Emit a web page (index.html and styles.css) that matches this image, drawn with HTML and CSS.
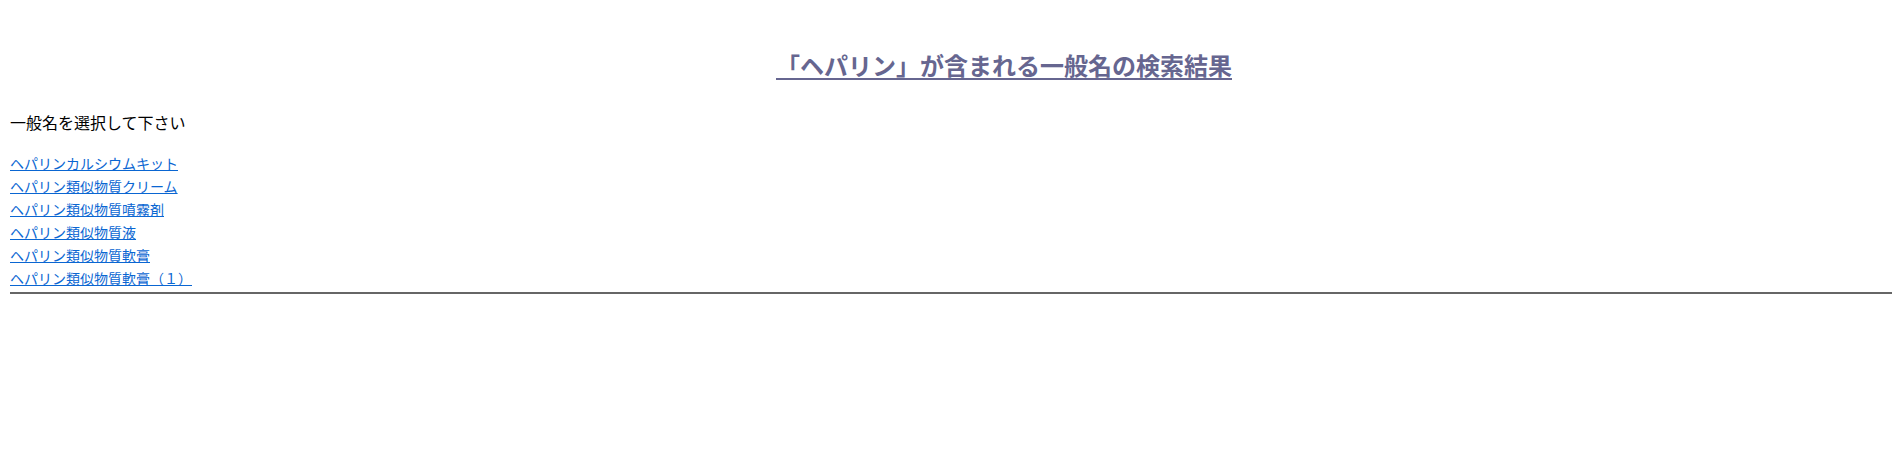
FILE: index.html
```html
<!DOCTYPE html>
<html lang="ja">
<head>
<meta charset="utf-8">
<title>検索結果</title>
<link rel="stylesheet" href="styles.css">
</head>
<body>
<div class="page">
  <h1 class="title">「ヘパリン」が含まれる一般名の検索結果</h1>
  <p class="lead">一般名を選択して下さい</p>
  <ul class="list">
    <li><a href="#">ヘパリンカルシウムキット</a></li>
    <li><a href="#">ヘパリン類似物質クリーム</a></li>
    <li><a href="#">ヘパリン類似物質噴霧剤</a></li>
    <li><a href="#">ヘパリン類似物質液</a></li>
    <li><a href="#">ヘパリン類似物質軟膏</a></li>
    <li><a href="#">ヘパリン類似物質軟膏（１）</a></li>
  </ul>
  <div class="rule"></div>
</div>
</body>
</html>
```
FILE: styles.css
```css
body {
  margin: 0;
  background: #fff;
  font-family: "Noto Sans CJK JP", "Noto Sans", sans-serif;
  color: #000;
}
.page {
  padding-left: 10px;
  padding-top: 49px;
}
.title {
  margin: 0;
  padding-left: 106px;
  text-align: center;
  font-size: 24px;
  line-height: 32px;
  font-weight: bold;
  color: #666690;
  text-decoration: underline;
  text-underline-offset: 3px;
}
.lead {
  margin: 29px 0 0;
  font-size: 16px;
  line-height: 24px;
}
.list {
  list-style: none;
  margin: 18px 0 0;
  padding: 0;
}
.list li {
  font-size: 14px;
  line-height: 23px;
}
.list a {
  color: #0a66d2;
}
.rule {
  height: 2px;
  background: #666;
  margin-top: 2px;
}
```
